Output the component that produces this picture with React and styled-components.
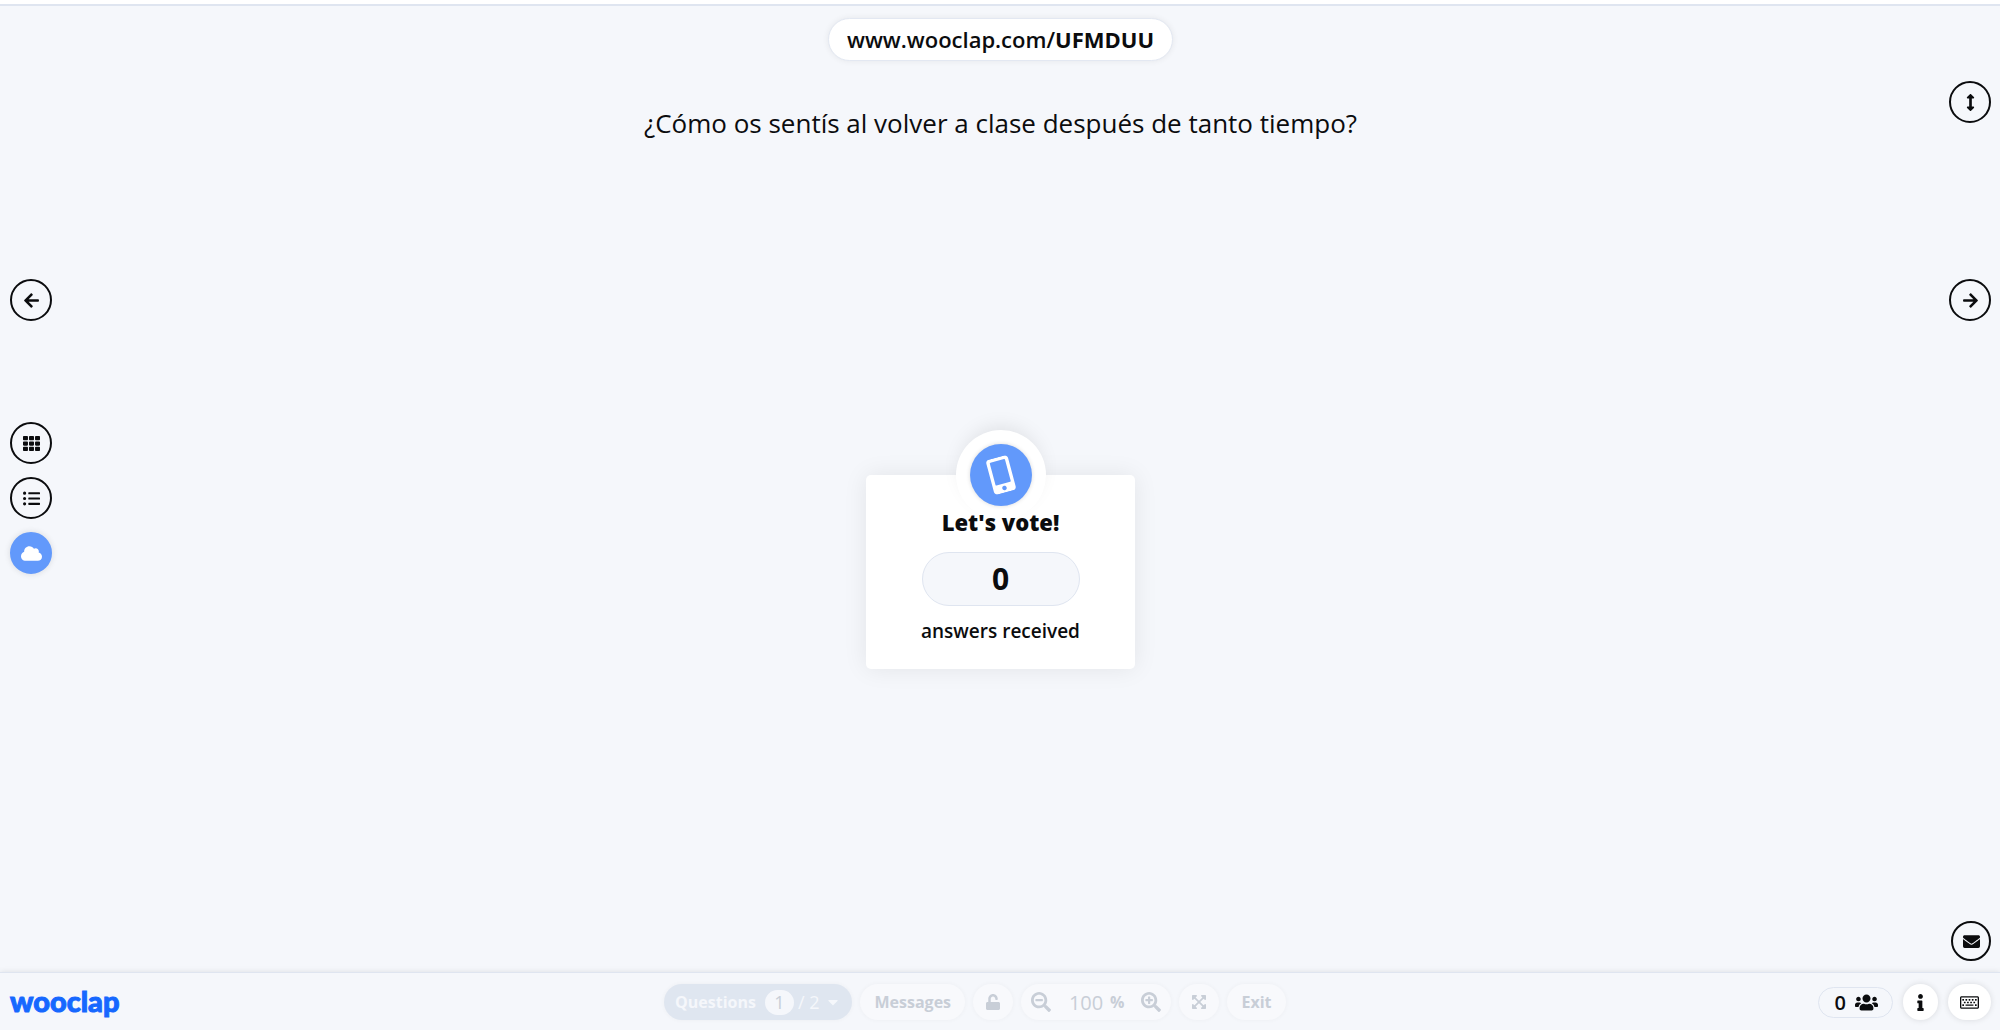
import React, { useState } from "react";
import styled, { createGlobalStyle, css } from "styled-components";
import {
  FaArrowLeft,
  FaArrowRight,
  FaArrowsAltV,
  FaCaretDown,
  FaCloud,
  FaEnvelope,
  FaExpandArrowsAlt,
  FaInfo,
  FaListUl,
  FaMobileAlt,
  FaRegKeyboard,
  FaSearchMinus,
  FaSearchPlus,
  FaTh,
  FaUnlock,
  FaUsers,
} from "react-icons/fa";

const views = [
  { id: "grid", label: "Grid view", icon: <FaTh /> },
  { id: "list", label: "List view", icon: <FaListUl /> },
  { id: "cloud", label: "Word cloud", icon: <FaCloud /> },
];

const App = () => {
  const [view, setView] = useState("cloud");
  const [question, setQuestion] = useState("1");
  const [zoom, setZoom] = useState(100);

  return (
    <Page>
      <GlobalStyle />
      <Stage>
        <Side>
          <RoundButton aria-label="Previous question">
            <FaArrowLeft />
          </RoundButton>
          <Views>
            {views.map((item) => (
              <RoundButton
                key={item.id}
                aria-label={item.label}
                $active={view === item.id}
                onClick={() => setView(item.id)}
              >
                {item.icon}
              </RoundButton>
            ))}
          </Views>
        </Side>

        <Main>
          <JoinLink href="#join">
            www.wooclap.com/<b>UFMDUU</b>
          </JoinLink>
          <Question>¿Cómo os sentís al volver a clase después de tanto tiempo?</Question>
          <Center>
            <Card>
              <Badge>
                <BadgeInner>
                  <FaMobileAlt />
                </BadgeInner>
              </Badge>
              <CardTitle>Let's vote!</CardTitle>
              <Answers>0</Answers>
              <CardText>answers received</CardText>
            </Card>
          </Center>
        </Main>

        <Side $right>
          <RoundButton aria-label="Resize">
            <FaArrowsAltV />
          </RoundButton>
          <RoundButton aria-label="Next question">
            <FaArrowRight />
          </RoundButton>
          <RoundButton aria-label="Messages" $small>
            <FaEnvelope />
          </RoundButton>
        </Side>
      </Stage>

      <Footer>
        <Logo href="#home">wooclap</Logo>

        <Controls>
          <Questions>
            <label htmlFor="question">Questions</label>
            <QuestionInput
              id="question"
              value={question}
              onChange={(e) => setQuestion(e.target.value)}
            />
            <Total>/ 2</Total>
            <IconButton aria-label="Show questions">
              <FaCaretDown />
            </IconButton>
          </Questions>
          <PillButton>Messages</PillButton>
          <PillButton aria-label="Unlock votes" $square>
            <FaUnlock />
          </PillButton>
          <Zoom>
            <IconButton aria-label="Zoom out" onClick={() => setZoom(zoom - 10)}>
              <FaSearchMinus />
            </IconButton>
            <ZoomValue>
              <ZoomInput
                id="zoom"
                aria-label="Zoom"
                value={zoom}
                onChange={(e) => setZoom(Number(e.target.value) || 0)}
              />
              <label htmlFor="zoom">%</label>
            </ZoomValue>
            <IconButton aria-label="Zoom in" onClick={() => setZoom(zoom + 10)}>
              <FaSearchPlus />
            </IconButton>
          </Zoom>
          <PillButton aria-label="Full screen" $square>
            <FaExpandArrowsAlt />
          </PillButton>
          <PillButton>Exit</PillButton>
        </Controls>

        <Status>
          <Participants>
            0 <FaUsers />
          </Participants>
          <StatusButton aria-label="Information">
            <FaInfo />
          </StatusButton>
          <StatusButton aria-label="Keyboard shortcuts" $wide>
            <FaRegKeyboard />
          </StatusButton>
        </Status>
      </Footer>
    </Page>
  );
};

export default App;

const GlobalStyle = createGlobalStyle`
  * {
    box-sizing: border-box;
  }

  body {
    margin: 0;
    background-color: #f5f7fb;
    color: #0b0c0e;
    font-family: "Open Sans", "Noto Sans", sans-serif;
  }

  button,
  input {
    font-family: inherit;
    color: inherit;
  }

  button {
    cursor: pointer;
  }

  svg {
    display: block;
  }
`;

const Page = styled.div`
  display: flex;
  flex-direction: column;
  min-height: 100vh;
  border-top: 4px solid #fff;
`;

const Stage = styled.div`
  flex: 1;
  display: grid;
  grid-template-columns: 62px 1fr 61px;
  border-top: 2px solid #dfe5f0;
`;

const Side = styled.nav`
  display: flex;
  flex-direction: column;
  align-items: center;
  padding: 273px 0 11px;

  ${(props) =>
    props.$right &&
    css`
      align-items: flex-end;
      padding-top: 75px;
      padding-right: 9px;

      button + button {
        margin-top: 156px;
      }

      button:last-child {
        margin-top: auto;
      }
    `}
`;

const RoundButton = styled.button`
  display: flex;
  align-items: center;
  justify-content: center;
  width: ${(props) => (props.$small ? 40 : 42)}px;
  height: ${(props) => (props.$small ? 40 : 42)}px;
  padding: 0;
  border: 2px solid #0b0c0e;
  border-radius: 50%;
  background: none;
  font-size: 17px;

  ${(props) =>
    props.$active &&
    css`
      border-color: #6299fb;
      background-color: #6299fb;
      color: #fff;
      font-size: 21px;
      box-shadow: 0 0 6px rgba(0, 0, 0, 0.12);
    `}
`;

const Views = styled.div`
  display: flex;
  flex-direction: column;
  gap: 13px;
  margin-top: 101px;
`;

const Main = styled.main`
  display: flex;
  flex-direction: column;
  align-items: center;
  padding-top: 12px;
`;

const JoinLink = styled.a`
  padding: 0 18px;
  border: 1px solid #e3e8f2;
  border-radius: 22px;
  background-color: #fff;
  box-shadow: 0 0 6px rgba(0, 0, 0, 0.07);
  color: inherit;
  font-size: 22px;
  font-weight: 600;
  line-height: 41px;
  text-decoration: none;

  b {
    font-weight: 700;
  }
`;

const Question = styled.h1`
  margin: 42px 0 28px;
  font-size: 26px;
  font-weight: 400;
  line-height: 40px;
`;

const Center = styled.div`
  flex: 1;
  display: flex;
  align-items: center;
`;

const Card = styled.section`
  display: flex;
  flex-direction: column;
  align-items: center;
  width: 269px;
  padding-bottom: 23px;
  border-radius: 5px;
  background-color: #fff;
  box-shadow: 0 0 24px rgba(0, 0, 0, 0.08);
`;

const Badge = styled.div`
  display: flex;
  align-items: center;
  justify-content: center;
  width: 90px;
  height: 90px;
  margin-top: -45px;
  border-radius: 50%;
  /* only the half above the card casts a shadow */
  background-color: #fff;
  box-shadow: 0 -8px 20px -6px rgba(0, 0, 0, 0.1);
`;

const BadgeInner = styled.div`
  display: flex;
  align-items: center;
  justify-content: center;
  width: 62px;
  height: 62px;
  border-radius: 50%;
  background-color: #6299fb;
  box-shadow: 0 0 4px rgba(0, 0, 0, 0.15);
  color: #fff;
  font-size: 36px;

  svg {
    transform: rotate(-15deg);
  }
`;

const CardTitle = styled.h2`
  margin: -14px 0 14px;
  font-size: 22px;
  font-weight: 800;
  line-height: 32px;
`;

const Answers = styled.div`
  width: 158px;
  border: 1px solid #dfe5f0;
  border-radius: 27px;
  background-color: #f5f7fb;
  font-size: 30px;
  font-weight: 700;
  line-height: 52px;
  text-align: center;
`;

const CardText = styled.p`
  margin: 10px 0 0;
  font-size: 19px;
  font-weight: 600;
  line-height: 30px;
`;

const Footer = styled.footer`
  display: flex;
  align-items: center;
  justify-content: space-between;
  height: 58px;
  padding: 1px 9px 0 10px;
  border-top: 1px solid #dfe5f0;
  box-shadow: 0 0 6px rgba(0, 0, 0, 0.1);
`;

const Logo = styled.a`
  min-width: 122px;
  padding-bottom: 3px;
  color: #1668ff;
  font-family: Lato, sans-serif;
  font-size: 29px;
  font-weight: 900;
  line-height: 32px;
  text-decoration: none;
  -webkit-text-stroke: 1px #1668ff;
`;

const Controls = styled.div`
  display: flex;
  align-items: center;
  gap: 8px;
  color: #c8ced7;
  font-size: 16px;
  font-weight: 700;
`;

const pill = css`
  display: flex;
  align-items: center;
  height: 36px;
  border-radius: 18px;
  box-shadow: 0 0 5px rgba(0, 0, 0, 0.04);
`;

const Questions = styled.div`
  ${pill}
  padding: 0 11px;
  background-color: #dfe6f0;
  color: #f5f7fb;
`;

const QuestionInput = styled.input`
  width: 29px;
  height: 25px;
  margin: 0 4px 0 9px;
  padding: 0;
  border: 0;
  border-radius: 13px;
  background-color: #f5f7fb;
  color: #c8ced7;
  font-size: 18px;
  text-align: center;
`;

const Total = styled.span`
  font-size: 18px;
  font-weight: 400;
`;

const IconButton = styled.button`
  padding: 0;
  border: 0;
  background: none;
  font-size: 20px;

  ${Questions} & {
    margin-left: 6px;
    font-size: 16px;
  }
`;

const PillButton = styled.button`
  ${pill}
  justify-content: center;
  padding: 0 ${(props) => (props.$square ? 12 : 14)}px;
  border: 0;
  background-color: #f8f9fc;
  font-size: 16px;
  font-weight: 700;
`;

const Zoom = styled.div`
  ${pill}
  gap: 17px;
  padding: 0 10px;
  background-color: #f8f9fc;
`;

const ZoomValue = styled.span`
  display: flex;
  align-items: center;
  gap: 6px;
`;

const ZoomInput = styled.input`
  width: 36px;
  padding: 0;
  border: 0;
  background: none;
  font-size: 20px;
  font-weight: 400;
  text-align: center;
`;

const Status = styled.div`
  display: flex;
  align-items: center;
  gap: 10px;
`;

const Participants = styled.div`
  display: flex;
  align-items: center;
  gap: 9px;
  height: 31px;
  padding: 0 14px 0 16px;
  border: 1px solid #dfe5f0;
  border-radius: 16px;
  font-size: 20px;
  font-weight: 600;

  svg {
    font-size: 23px;
  }
`;

const StatusButton = styled.button`
  display: flex;
  align-items: center;
  justify-content: center;
  width: ${(props) => (props.$wide ? 43 : 35)}px;
  height: 36px;
  padding: 0;
  border: 0;
  border-radius: 20px;
  background-color: #fff;
  box-shadow: 0 0 6px rgba(0, 0, 0, 0.12);
  font-size: ${(props) => (props.$wide ? 19 : 17)}px;
`;
